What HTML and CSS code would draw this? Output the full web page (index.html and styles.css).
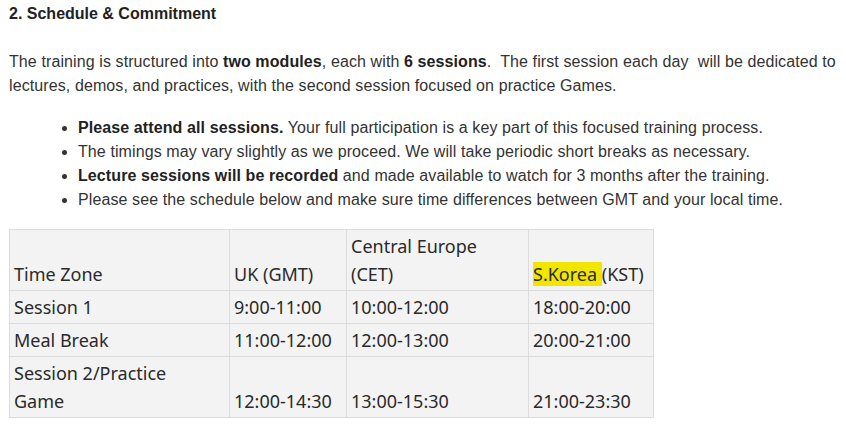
FILE: index.html
```html
<!DOCTYPE html>
<html>
<head>
<meta charset="utf-8">
<link rel="stylesheet" href="styles.css">
</head>
<body>
<div class="page">
  <h2 class="title">2. Schedule &amp; Commitment</h2>
  <p class="intro">The training is structured into <b>two modules</b>, each with <b>6 sessions</b>.&nbsp; The first session each day&nbsp; will be dedicated to lectures, demos, and practices, with the second session focused on practice Games.</p>
  <ul class="points">
    <li><b>Please attend all sessions.</b> Your full participation is a key part of this focused training process.</li>
    <li>The timings may vary slightly as we proceed. We will take periodic short breaks as necessary.</li>
    <li><b>Lecture sessions will be recorded</b> and made available to watch for 3 months after the training.</li>
    <li>Please see the schedule below and make sure time differences between GMT and your local time.</li>
  </ul>
  <table class="schedule">
    <colgroup>
      <col class="c1"><col class="c2"><col class="c3"><col class="c4">
    </colgroup>
    <tr>
      <td>Time Zone</td>
      <td>UK (GMT)</td>
      <td class="wrap">Central Europe (CET)</td>
      <td class="keep"><span class="hl">S.Korea </span>(KST)</td>
    </tr>
    <tr>
      <td>Session 1</td>
      <td>9:00-11:00</td>
      <td>10:00-12:00</td>
      <td>18:00-20:00</td>
    </tr>
    <tr>
      <td>Meal Break</td>
      <td>11:00-12:00</td>
      <td>12:00-13:00</td>
      <td>20:00-21:00</td>
    </tr>
    <tr>
      <td class="wrap">Session 2/Practice Game</td>
      <td>12:00-14:30</td>
      <td>13:00-15:30</td>
      <td>21:00-23:30</td>
    </tr>
  </table>
</div>
</body>
</html>
```
FILE: styles.css
```css
html, body {
  margin: 0;
  padding: 0;
  background: #ffffff;
}
.page {
  padding: 2px 0 0 9px;
  font-family: "Liberation Sans", Arial, sans-serif;
  color: #222222;
}
.title {
  margin: 0;
  font-size: 16px;
  line-height: 24px;
  font-weight: bold;
  color: #222222;
}
.intro {
  margin: 24px 0 0 0;
  font-size: 16px;
  line-height: 24px;
  letter-spacing: 0.1px;
  color: #333333;
}
.intro b, .points b {
  color: #222222;
}
.points {
  margin: 18px 0 0 0;
  padding-left: 69px;
  font-size: 16px;
  line-height: 24px;
  letter-spacing: 0.1px;
  color: #333333;
}
.schedule {
  margin-top: 17px;
  border-collapse: collapse;
  table-layout: fixed;
  width: 644px;
  background: #f3f3f3;
  font-family: "Noto Sans", "Open Sans", sans-serif;
  font-size: 18px;
  line-height: 28px;
  color: #2a2a2a;
}
.c1 { width: 220px; }
.c2 { width: 117px; }
.c3 { width: 182px; }
.c4 { width: 125px; }
.schedule td {
  border: 1px solid #dcdcdc;
  padding: 2px 4px 2px 4px;
  vertical-align: bottom;
}
.schedule td.wrap {
  padding-right: 14px;
}
.schedule td.keep {
  white-space: nowrap;
}
.hl {
  background: #f2e600;
}
```
